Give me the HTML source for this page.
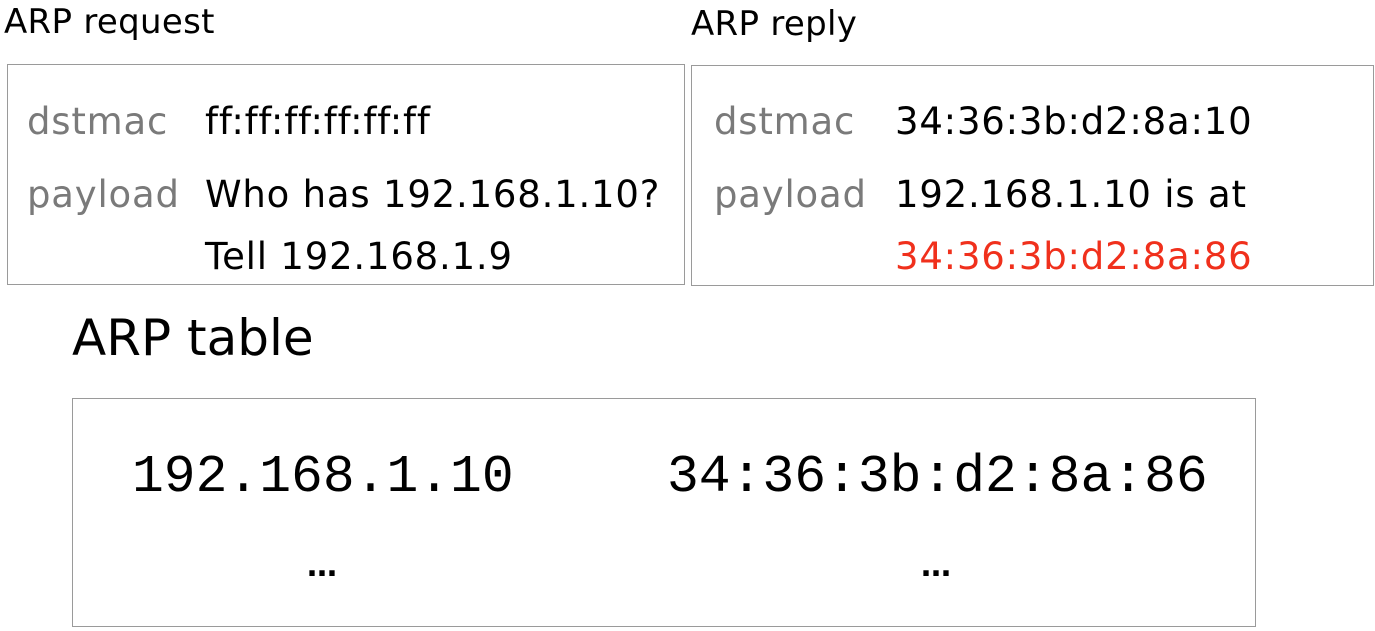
<!DOCTYPE html>
<html><head><meta charset="utf-8"><style>
html,body{margin:0;padding:0;background:#fff;width:1375px;height:631px;overflow:hidden;position:relative;font-family:"DejaVu Sans",sans-serif}
.t{position:absolute;white-space:nowrap;line-height:1}
.b{font-size:37px;letter-spacing:0.8px}
.box{position:absolute;border:1.5px solid #9a9a9a;box-sizing:border-box}
.g{color:#7a7a7a}
.m{font-family:"Liberation Mono",monospace}
</style></head><body>
<div class="t" style="left:4px;top:5px;font-size:34px;letter-spacing:0.3px">ARP request</div>
<div class="t" style="left:691px;top:7px;font-size:34px;letter-spacing:0.3px">ARP reply</div>
<div class="box" style="left:7px;top:64px;width:678px;height:221px"></div>
<div class="box" style="left:691px;top:65px;width:683px;height:221px"></div>
<div class="t g b" style="left:27px;top:103px">dstmac</div>
<div class="t b" style="left:205px;top:103px">ff:ff:ff:ff:ff:ff</div>
<div class="t g b" style="left:27px;top:176px">payload</div>
<div class="t b" style="left:205px;top:176px">Who has 192.168.1.10?</div>
<div class="t b" style="left:205px;top:238px">Tell 192.168.1.9</div>
<div class="t g b" style="left:714px;top:103px">dstmac</div>
<div class="t b" style="left:895px;top:103px">34:36:3b:d2:8a:10</div>
<div class="t g b" style="left:714px;top:176px">payload</div>
<div class="t b" style="left:895px;top:176px">192.168.1.10 is at</div>
<div class="t b" style="left:895px;top:238px;color:#f0301c">34:36:3b:d2:8a:86</div>
<div class="t" style="left:72px;top:313px;font-size:50px">ARP table</div>
<div class="box" style="left:72px;top:398px;width:1184px;height:229px"></div>
<div class="t m" style="left:132px;top:451px;font-size:53px">192.168.1.10</div>
<div class="t m" style="left:667px;top:451px;font-size:53px">34:36:3b:d2:8a:86</div>
<div class="t" style="left:307px;top:552px;font-size:30px;font-weight:bold">…</div>
<div class="t" style="left:921px;top:552px;font-size:30px;font-weight:bold">…</div>
</body></html>
